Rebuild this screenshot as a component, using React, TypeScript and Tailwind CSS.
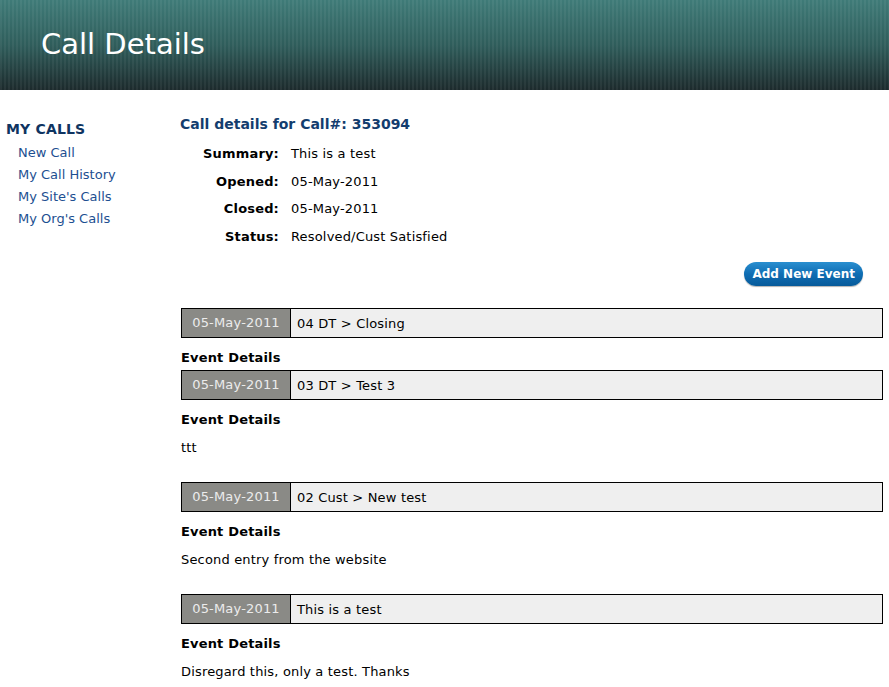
import React from "react";

interface CallEvent {
  date: string;
  title: string;
  details?: string;
}

const events: CallEvent[] = [
  { date: "05-May-2011", title: "04 DT > Closing" },
  { date: "05-May-2011", title: "03 DT > Test 3", details: "ttt" },
  { date: "05-May-2011", title: "02 Cust > New test", details: "Second entry from the website" },
  { date: "05-May-2011", title: "This is a test", details: "Disregard this, only a test. Thanks" },
];

const fields = [
  ["Summary:", "This is a test"],
  ["Opened:", "05-May-2011"],
  ["Closed:", "05-May-2011"],
  ["Status:", "Resolved/Cust Satisfied"],
];

export default function App() {
  return (
    <div className="min-h-[687px] bg-white text-[13px] tracking-[0.17px] text-black font-['DejaVu_Sans',Verdana,sans-serif]">
      {/* header banner */}
      <div className="h-[90px] flex items-center pl-[41px] bg-[linear-gradient(90deg,rgba(255,255,255,0.05)_50%,transparent_50%),linear-gradient(180deg,#3f7b78_0%,#2f5d5b_50%,#1c2a2c_100%)] bg-[length:4px_100%,100%_100%]">
        <h1 className="text-[29px] tracking-normal text-white leading-none pb-[2px]">Call Details</h1>
      </div>

      <div className="flex">
        {/* sidebar */}
        <div className="w-[180px] shrink-0 pl-[6px] pt-[30px]">
          <div className="text-[14px] font-bold text-[#0f3461] leading-[18px]">MY CALLS</div>
          <ul className="pl-[12px] mt-[4px] text-[#1d4f91] tracking-normal">
            {["New Call", "My Call History", "My Site's Calls", "My Org's Calls"].map((l) => (
              <li key={l} className="leading-[22px]">
                {l}
              </li>
            ))}
          </ul>
        </div>

        {/* main */}
        <div className="flex-1 pr-[6px] pt-[24px]">
          <h2 className="text-[14px] tracking-normal font-bold text-[#133d6e] leading-[20px]">
            Call details for Call#: 353094
          </h2>
          <div className="mt-[6px] ml-[1px]">
            {fields.map(([k, v]) => (
              <div key={k} className="flex leading-[27.5px]">
                <div className="w-[98px] text-right font-bold">{k}</div>
                <div className="pl-[12px]">{v}</div>
              </div>
            ))}
          </div>

          <div className="flex justify-end mt-[12px] pr-[20px]">
            <button className="h-[24px] px-[8px] rounded-full bg-[linear-gradient(180deg,#2a8fd0_0%,#0f6db3_50%,#065a9a_100%)] text-white text-[12px] tracking-normal font-bold leading-none shadow-[0_1px_1px_rgba(0,0,0,0.3)]">
              Add New Event
            </button>
          </div>

          <div className="mt-[22px] ml-[1px]">
            {events.map((e, i) => (
              <div key={i}>
                <div className="flex h-[30px] border border-black bg-[#efefef]">
                  <div className="w-[109px] bg-[#8a8a86] text-[#ececec] flex items-center justify-center border-r border-black">
                    {e.date}
                  </div>
                  <div className="flex items-center pl-[6px] pt-[1px]">{e.title}</div>
                </div>
                <div className="font-bold leading-[16px] pt-[12px] pb-[4px]">Event Details</div>
                {e.details && (
                  <div className="leading-[16px] pt-[8px] pb-[26px]">{e.details}</div>
                )}
              </div>
            ))}
          </div>
        </div>
      </div>
    </div>
  );
}
